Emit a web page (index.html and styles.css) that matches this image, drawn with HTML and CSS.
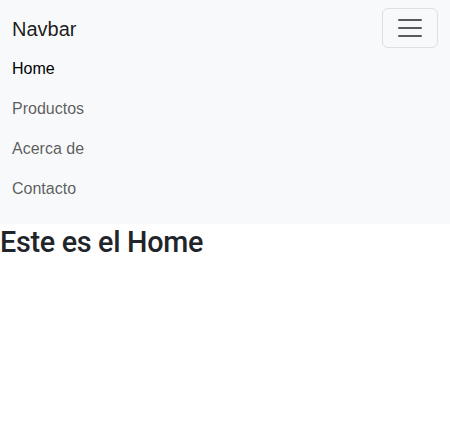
FILE: index.html
```html
<!DOCTYPE html>
<html lang="es">
<head>
<meta charset="utf-8">
<title>Navbar</title>
<link rel="stylesheet" href="styles.css">
</head>
<body>
<nav class="navbar">
  <div class="navbar-inner">
    <div class="navbar-top">
      <a class="navbar-brand" href="#">Navbar</a>
      <button class="navbar-toggler" type="button" aria-label="Toggle navigation">
        <svg class="toggler-icon" viewBox="0 0 30 30" width="30" height="30">
          <path stroke="rgba(33,37,41,0.75)" stroke-linecap="round" stroke-miterlimit="10" stroke-width="2" d="M4 7h22M4 15h22M4 23h22"/>
        </svg>
      </button>
    </div>
    <ul class="navbar-nav">
      <li><a class="nav-link active" href="#">Home</a></li>
      <li><a class="nav-link" href="#">Productos</a></li>
      <li><a class="nav-link" href="#">Acerca de</a></li>
      <li><a class="nav-link" href="#">Contacto</a></li>
    </ul>
  </div>
</nav>
<h1 class="page-title">Este es el Home</h1>
</body>
</html>
```
FILE: styles.css
```css
* { box-sizing: border-box; }
body {
  margin: 0;
  font-family: "Liberation Sans", Arial, sans-serif;
  font-size: 16px;
  line-height: 1.5;
  color: #212529;
  background: #fff;
}
.navbar {
  background: #f8f9fa;
  padding: 8px 0;
}
.navbar-inner {
  padding: 0 12px;
}
.navbar-top {
  display: flex;
  justify-content: space-between;
  align-items: center;
}
.navbar-brand {
  font-size: 20px;
  line-height: 30px;
  padding: 6px 0 4px;
  color: rgba(0,0,0,0.9);
  text-decoration: none;
}
.navbar-toggler {
  width: 56px;
  height: 40px;
  padding: 4px 12px;
  background: transparent;
  border: 1px solid rgba(0,0,0,0.1);
  border-radius: 6px;
  display: flex;
  align-items: center;
  justify-content: center;
}
.toggler-icon { display: block; }
.navbar-nav {
  list-style: none;
  margin: 0 0 8px;
  padding: 0;
}
.nav-link {
  display: block;
  padding: 9px 0 7px;
  line-height: 24px;
  color: rgba(0,0,0,0.65);
  text-decoration: none;
}
.nav-link.active { color: rgba(0,0,0,1); }
.page-title {
  margin: 0 0 7px;
  padding-top: 1px;
  font-family: Roboto, "Liberation Sans", sans-serif;
  font-size: 28.75px;
  font-weight: 500;
  line-height: 1.2;
  letter-spacing: -0.3px;
}
```
